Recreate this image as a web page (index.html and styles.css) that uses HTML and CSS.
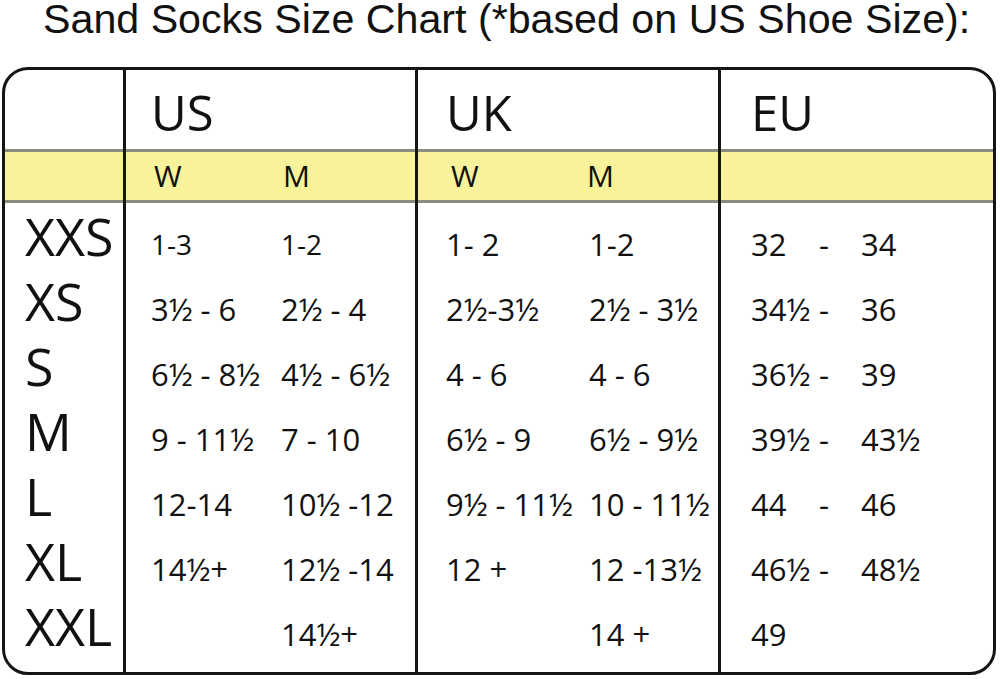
FILE: index.html
```html
<!DOCTYPE html>
<html>
<head>
<meta charset="utf-8">
<title>Sand Socks Size Chart</title>
<link rel="stylesheet" href="styles.css">
</head>
<body>
<h1 class="title">Sand Socks Size Chart (*based on US Shoe Size):</h1>
<div class="chart">
  <div class="col col-label">
    <div class="head"></div>
    <div class="band"></div>
    <div class="body">
      <div class="row">XXS</div>
      <div class="row">XS</div>
      <div class="row">S</div>
      <div class="row">M</div>
      <div class="row">L</div>
      <div class="row">XL</div>
      <div class="row">XXL</div>
    </div>
  </div>
  <div class="col col-us">
    <div class="head">US</div>
    <div class="band"><span>W</span><span>M</span></div>
    <div class="body">
      <div class="row row-small"><span>1-3</span><span>1-2</span></div>
      <div class="row"><span>3½ - 6</span><span>2½ - 4</span></div>
      <div class="row"><span>6½ - 8½</span><span>4½ - 6½</span></div>
      <div class="row"><span>9 - 11½</span><span>7 - 10</span></div>
      <div class="row"><span>12-14</span><span>10½ -12</span></div>
      <div class="row"><span>14½+</span><span>12½ -14</span></div>
      <div class="row"><span></span><span>14½+</span></div>
    </div>
  </div>
  <div class="col col-uk">
    <div class="head">UK</div>
    <div class="band"><span>W</span><span>M</span></div>
    <div class="body">
      <div class="row"><span>1- 2</span><span>1-2</span></div>
      <div class="row"><span>2½-3½</span><span>2½ - 3½</span></div>
      <div class="row"><span>4 - 6</span><span>4 - 6</span></div>
      <div class="row"><span>6½ - 9</span><span>6½ - 9½</span></div>
      <div class="row"><span>9½ - 11½</span><span>10 - 11½</span></div>
      <div class="row"><span>12 +</span><span>12 -13½</span></div>
      <div class="row"><span></span><span>14 +</span></div>
    </div>
  </div>
  <div class="col col-eu">
    <div class="head">EU</div>
    <div class="band"></div>
    <div class="body">
      <div class="row"><span>32</span><span>-</span><span>34</span></div>
      <div class="row"><span>34½</span><span>-</span><span>36</span></div>
      <div class="row"><span>36½</span><span>-</span><span>39</span></div>
      <div class="row"><span>39½</span><span>-</span><span>43½</span></div>
      <div class="row"><span>44</span><span>-</span><span>46</span></div>
      <div class="row"><span>46½</span><span>-</span><span>48½</span></div>
      <div class="row"><span>49</span><span></span><span></span></div>
    </div>
  </div>
</div>
</body>
</html>
```
FILE: styles.css
```css
html, body {
  margin: 0;
  padding: 0;
  background: #ffffff;
}

body {
  width: 1000px;
  height: 679px;
  overflow: hidden;
  color: #111111;
}

.title {
  margin: 0;
  padding-left: 43px;
  font-family: "Liberation Sans", Arial, sans-serif;
  font-weight: normal;
  font-size: 41.2px;
  line-height: 38px;
  white-space: nowrap;
  color: #111111;
}

.chart {
  margin: 29px 4px 0 2px;
  height: 608px;
  box-sizing: border-box;
  border: 3px solid #151515;
  border-radius: 26px;
  display: flex;
  overflow: hidden;
  font-family: "Open Sans", "Noto Sans", sans-serif;
  color: #111111;
}

.col {
  display: flex;
  flex-direction: column;
}

.col + .col {
  border-left: 3px solid #151515;
}

.col-label { width: 118px; }
.col-us { width: 289px; }
.col-uk { width: 300px; }
.col-eu { flex: 1; }

.head {
  height: 73px;
  padding-top: 6px;
  line-height: 73px;
  font-size: 49px;
  border-bottom: 3px solid #8d8b7b;
  white-space: nowrap;
}

.band {
  height: 48px;
  line-height: 48px;
  font-size: 30px;
  background: #f8f39a;
  border-bottom: 3px solid #8d8b7b;
  white-space: nowrap;
}

.body {
  flex: 1;
  padding-top: 9px;
}

.row {
  height: 65px;
  line-height: 65px;
  font-size: 31px;
  white-space: nowrap;
}

.row-small {
  font-size: 28px;
}

.col-label .body {
  padding-top: 0;
}

.col-label .row {
  font-size: 52px;
  padding-left: 20px;
}

.col-us .head { padding-left: 25px; }
.col-us .band {
  display: grid;
  grid-template-columns: 129px 1fr;
  padding-left: 28px;
}
.col-us .row {
  display: grid;
  grid-template-columns: 130px 1fr;
  padding-left: 25px;
}

.col-uk .head { padding-left: 28px; }
.col-uk .band {
  display: grid;
  grid-template-columns: 136px 1fr;
  padding-left: 33px;
}
.col-uk .row {
  display: grid;
  grid-template-columns: 143px 1fr;
  padding-left: 28px;
}

.col-eu .head { padding-left: 30px; }
.col-eu .row {
  display: grid;
  grid-template-columns: 68px 42px 1fr;
  padding-left: 30px;
}
```
